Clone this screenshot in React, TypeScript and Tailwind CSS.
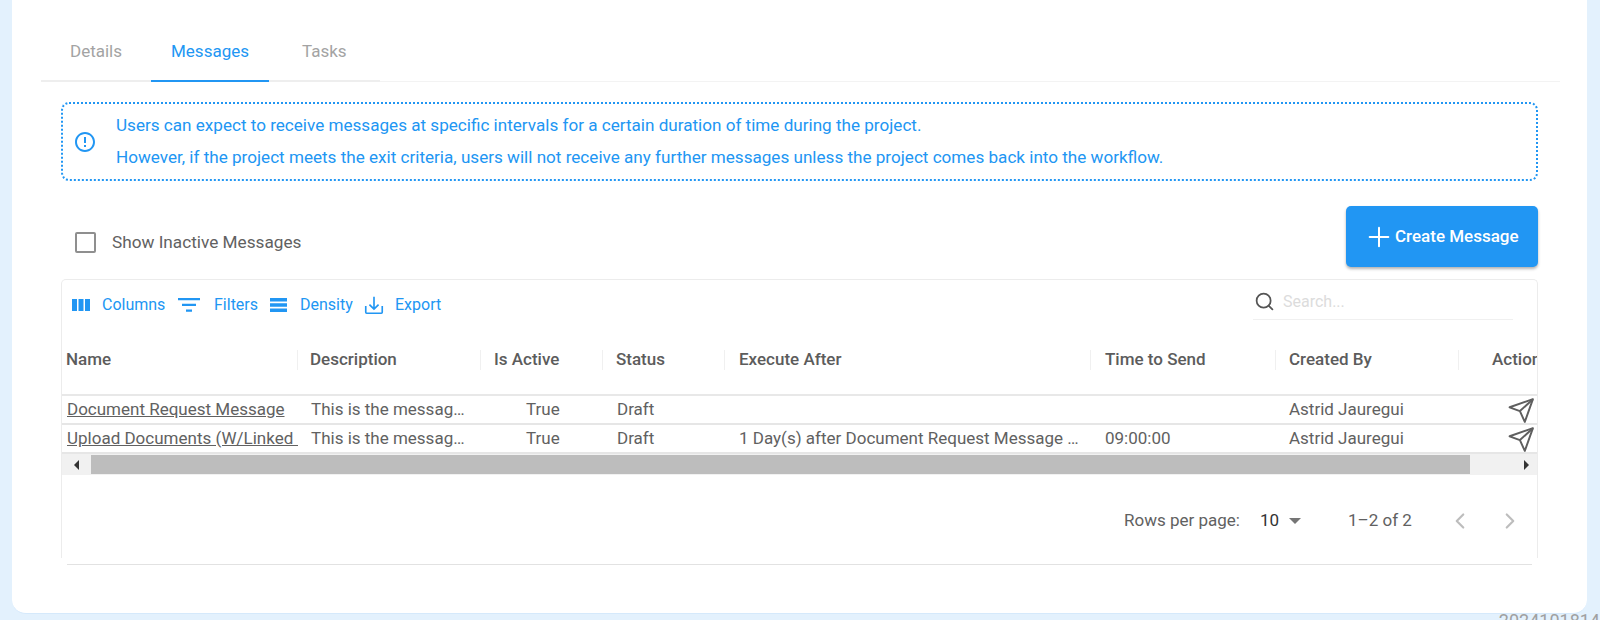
import { Search, Plus, ChevronLeft, ChevronRight } from 'lucide-react';

const gridCols = 'grid grid-cols-[236px_183px_122px_122px_366px_185px_183px_79px]';

const headers = [
  { label: 'Name', pad: 'pl-[4px]' },
  { label: 'Description', pad: 'pl-[12px]' },
  { label: 'Is Active', pad: 'pl-[13px]' },
  { label: 'Status', pad: 'pl-[13px]' },
  { label: 'Execute After', pad: 'pl-[14px]' },
  { label: 'Time to Send', pad: 'pl-[14px]' },
  { label: 'Created By', pad: 'pl-[13px]' },
  { label: 'Actions', pad: 'pl-[33px]' },
];

const rows = [
  {
    name: 'Document Request Message',
    execute: '',
    time: '',
  },
  {
    name: 'Upload Documents (W/Linked Files)',
    execute: '1 Day(s) after Document Request Message …',
    time: '09:00:00',
  },
];

function PlaneIcon() {
  return (
    <svg viewBox="0 0 24 24" className="w-[26px] h-[26px]" fill="none" stroke="#5f5f5f" strokeWidth="1.8" strokeLinejoin="round">
      <path d="M23 2 15.5 23 11 13 1.5 9.5Z" />
      <path d="M23 2 11 13" />
    </svg>
  );
}

export default function App() {
  return (
    <div className="h-[620px] overflow-hidden bg-[#e3f1fd] pl-[12px] pr-[13px] font-['Roboto',sans-serif] text-[#616161]">
      <div className="h-[614px] bg-white rounded-b-[14px] pl-[29px] pr-[27px] pt-[31px] border-b border-[#d5e9fb]">
        {/* tabs */}
        <div className="border-b border-[#f3f3f3] h-[51px]">
          <div className="flex w-[339px] h-[51px] border-b-2 border-[#eeeeee] pl-[9px] text-[17px]">
            <div className="w-[101px] pl-[20px] pt-[8px] text-[#a3a3a3]">Details</div>
            <div className="w-[118px] h-[51px] pl-[20px] pt-[8px] text-[#2196f3] border-b-2 border-[#2196f3]">Messages</div>
            <div className="pl-[33px] pt-[8px] text-[#a3a3a3]">Tasks</div>
          </div>
        </div>

        <div className="ml-[20px] mr-[22px]">
          {/* info box */}
          <div className="mt-[20px] h-[79px] flex items-center border-2 border-dotted border-[#2196f3] rounded-[8px] text-[#2196f3]">
            <svg viewBox="0 0 24 24" className="w-[24px] h-[24px] ml-[10px] shrink-0" fill="#2196f3">
              <path d="M11 15h2v2h-2zm0-8h2v6h-2zm.99-5C6.47 2 2 6.48 2 12s4.47 10 9.99 10C17.52 22 22 17.52 22 12S17.52 2 11.99 2zM12 20c-4.42 0-8-3.58-8-8s3.58-8 8-8 8 3.58 8 8-3.58 8-8 8z" />
            </svg>
            <div className="ml-[19px] pb-[1px] text-[17.1px] leading-[32px]">
              <p>Users can expect to receive messages at specific intervals for a certain duration of time during the project.</p>
              <p>However, if the project meets the exit criteria, users will not receive any further messages unless the project comes back into the workflow.</p>
            </div>
          </div>

          {/* checkbox + create */}
          <div className="mt-[25px] flex items-start justify-between">
            <div className="flex items-center mt-[26px] ml-[14px]">
              <div className="w-[21px] h-[21px] border-2 border-[#8f8f8f] rounded-[2px]" />
              <span className="ml-[16px] text-[17.2px] leading-[21px]">Show Inactive Messages</span>
            </div>
            <button className="w-[192px] h-[61px] bg-[#2196f3] rounded-[5px] shadow-[0_2px_3px_rgba(0,0,0,0.3)] text-white text-[17px] font-medium flex items-center pl-[17px]">
              <Plus className="w-[32px] h-[32px]" strokeWidth={1.5} />
              <span>Create Message</span>
            </button>
          </div>

          {/* data grid */}
          <div className="mt-[12px] h-[279px] border border-b-0 border-[#ececec] rounded-t-[5px] flex flex-col overflow-hidden">
            <div className="h-[50px] flex items-center shrink-0 text-[#2196f3] text-[16px]">
              <svg viewBox="0 0 18 14" className="w-[18px] h-[14px] ml-[10px]" fill="#2196f3">
                <path d="M0 1h5v12H0zM6.5 1h5v12h-5zM13 1h5v12h-5z" />
              </svg>
              <span className="ml-[12px] w-[63px]">Columns</span>
              <svg viewBox="0 0 22 14" className="w-[22px] h-[14px] ml-[13px]" fill="#2196f3">
                <path d="M0 0h22v2.2H0zM4 5.8h14V8H4zM8 11.6h6v2.2H8z" />
              </svg>
              <span className="ml-[14px] w-[45px]">Filters</span>
              <svg viewBox="0 0 17 14" className="w-[17px] h-[14px] ml-[11px]" fill="#2196f3">
                <path d="M0 0h17v3.4H0zM0 5.3h17v3.4H0zM0 10.6h17V14H0z" />
              </svg>
              <span className="ml-[13px] w-[53px]">Density</span>
              <svg viewBox="0 0 24 24" className="w-[22px] h-[22px] ml-[10px]" fill="none" stroke="#2196f3" strokeWidth="1.8">
                <path d="M3 13v7a1 1 0 0 0 1 1h16a1 1 0 0 0 1-1v-7" />
                <path d="M12 3v13M7 11.5l5 5 5-5" />
              </svg>
              <span className="ml-[10px]">Export</span>
              <div className="ml-auto mr-[24px] w-[260px] h-[40px] self-start pt-[4px] border-b border-[#f0f0f0] flex items-center pl-[1px]">
                <Search className="w-[21px] h-[21px] text-[#555555]" strokeWidth={2} />
                <span className="ml-[8px] text-[#dcdcdc] text-[16px]">Search...</span>
              </div>
            </div>

            <div className={`${gridCols} h-[66px] shrink-0 items-center border-b-2 border-[#e8e8e8] pb-[5px] text-[17px] font-medium text-[#5c5c5c]`}>
              {headers.map((h, i) => (
                <div key={h.label} className={`flex items-center justify-between overflow-hidden whitespace-nowrap ${h.pad}`}>
                  <span>{h.label}</span>
                  {i < 7 && <span className="w-px h-[20px] bg-[#f0f0f0] shrink-0" />}
                </div>
              ))}
            </div>

            {rows.map((r) => (
              <div key={r.name} className={`${gridCols} h-[29px] shrink-0 items-center border-b-2 border-[#e6e6e6] text-[17px] whitespace-nowrap`}>
                <div className="pl-[5px] pr-[1px] overflow-hidden underline">{r.name}</div>
                <div className="pl-[13px]">This is the messag…</div>
                <div className="pl-[45px]">True</div>
                <div className="pl-[14px]">Draft</div>
                <div className="pl-[14px]">{r.execute}</div>
                <div className="pl-[14px]">{r.time}</div>
                <div className="pl-[13px]">Astrid Jauregui</div>
                <div className="pl-[49px]"><PlaneIcon /></div>
              </div>
            ))}

            {/* horizontal scrollbar */}
            <div className="h-[21px] shrink-0 bg-[#f1f1f1] flex items-center">
              <div className="w-[29px] flex justify-center">
                <span className="w-0 h-0 border-y-[5px] border-y-transparent border-r-[5px] border-r-[#333333]" />
              </div>
              <div className="w-[1379px] h-[19px] bg-[#bdbdbd]" />
              <div className="flex-1 flex justify-end pr-[8px]">
                <span className="w-0 h-0 border-y-[5px] border-y-transparent border-l-[5px] border-l-[#333333]" />
              </div>
            </div>

            {/* pagination */}
            <div className="flex-1 flex items-center text-[17px] pt-[9px]">
              <span className="ml-[1062px] w-[116px] whitespace-nowrap">Rows per page:</span>
              <span className="ml-[20px] w-[19px] text-[#333333]">10</span>
              <span className="ml-[10px] w-0 h-0 border-x-[6px] border-x-transparent border-t-[6px] border-t-[#757575]" />
              <span className="ml-[47px] w-[64px] whitespace-nowrap">1–2 of 2</span>
              <ChevronLeft className="ml-[35px] w-[26px] h-[26px] text-[#bdbdbd]" strokeWidth={2} />
              <ChevronRight className="ml-[24px] w-[26px] h-[26px] text-[#bdbdbd]" strokeWidth={2} />
            </div>
          </div>
          <div className="mt-[6px] mx-[6px] h-px bg-[#e2e2e2]" />
        </div>
      </div>
      <div className="-mt-[1px] text-right -mr-[13px] h-[7px] overflow-hidden">
        <span className="text-[18px] leading-[16px] block text-[#a0a0a0] whitespace-nowrap">2024101814</span>
      </div>
    </div>
  );
}
